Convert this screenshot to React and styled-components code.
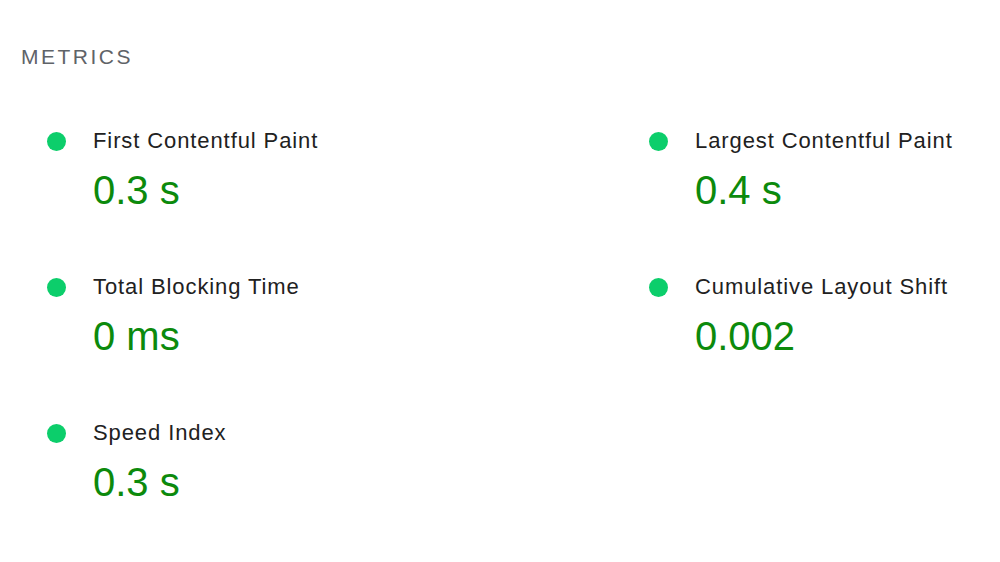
import React from 'react'
import styled, { createGlobalStyle } from 'styled-components'

const GlobalStyle = createGlobalStyle`
  html, body {
    margin: 0;
    padding: 0;
    background: #ffffff;
  }
  body {
    font-family: 'Liberation Sans', Arial, sans-serif;
  }
`

const metrics = [
  { label: 'First Contentful Paint', value: '0.3 s' },
  { label: 'Largest Contentful Paint', value: '0.4 s' },
  { label: 'Total Blocking Time', value: '0 ms' },
  { label: 'Cumulative Layout Shift', value: '0.002' },
  { label: 'Speed Index', value: '0.3 s' },
]

const App = () => {
  return (
    <Page>
      <GlobalStyle />
      <Heading>METRICS</Heading>
      <Grid>
        {metrics.map((m) => (
          <Metric key={m.label}>
            <LabelRow>
              <Dot />
              <Label>{m.label}</Label>
            </LabelRow>
            <Value>{m.value}</Value>
          </Metric>
        ))}
      </Grid>
    </Page>
  )
}

const Page = styled.div`
  width: 1000px;
  height: 562px;
  box-sizing: border-box;
  padding: 43px 0 0 21px;
  background: #fff;
  overflow: hidden;
`

const Heading = styled.div`
  font-size: 21px;
  line-height: 28px;
  letter-spacing: 2.5px;
  color: #5f6368;
`

const Grid = styled.div`
  display: grid;
  grid-template-columns: 602px 1fr;
  row-gap: 59px;
  margin-top: 56px;
  padding-left: 26px;
`

const Metric = styled.div`
  display: flex;
  flex-direction: column;
`

const LabelRow = styled.div`
  display: flex;
  align-items: center;
  height: 28px;
`

const Dot = styled.span`
  width: 19px;
  height: 19px;
  border-radius: 50%;
  background: #0cce6b;
  flex-shrink: 0;
  margin-right: 27px;
`

const Label = styled.span`
  font-size: 22px;
  line-height: 26px;
  letter-spacing: 0.9px;
  color: #212121;
`

const Value = styled.div`
  margin-top: 11px;
  padding-left: 46px;
  font-size: 40px;
  line-height: 48px;
  color: #0c8a0c;
`

export default App
